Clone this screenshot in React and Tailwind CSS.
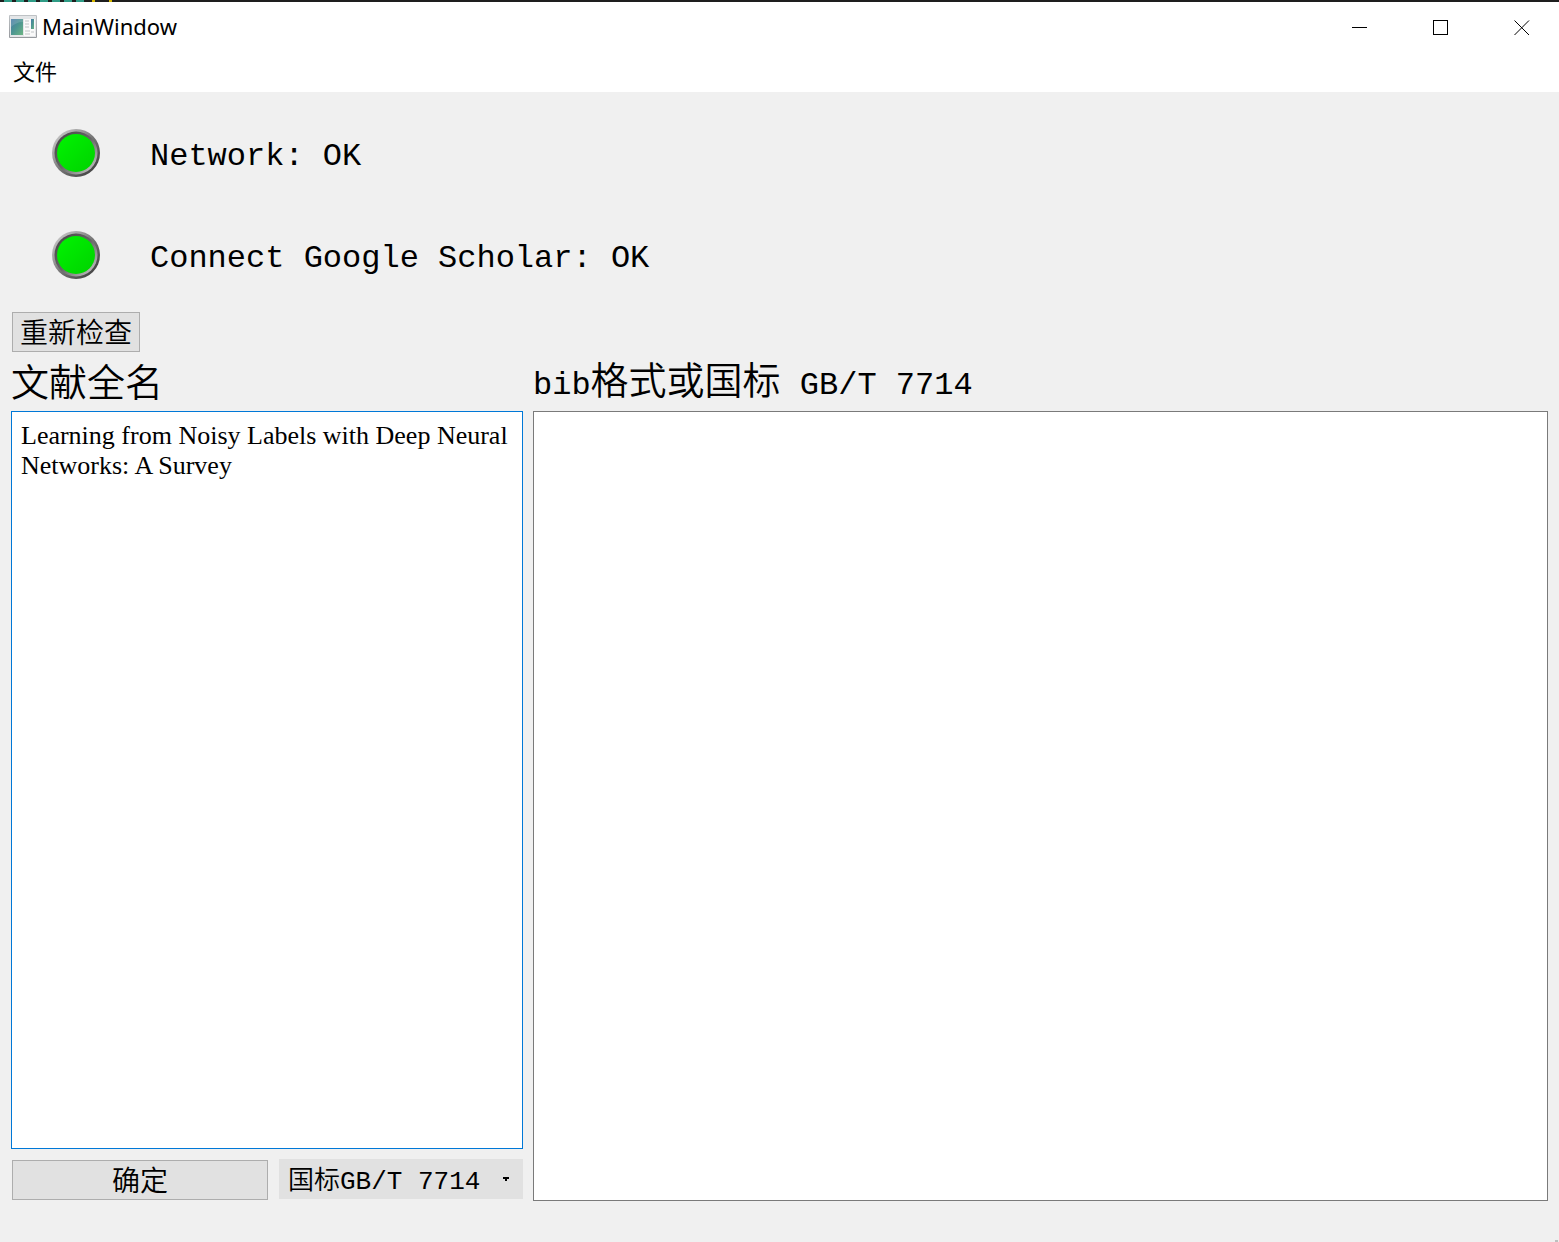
import React from "react";

const mono = "font-['Liberation_Mono','Noto_Sans_CJK_SC',monospace]";
const cjk = "font-['Noto_Sans_CJK_SC',sans-serif] font-[350]";

function AppIcon() {
  return (
    <svg width="28" height="24" viewBox="0 0 28 24" aria-hidden="true">
      <defs>
        <linearGradient id="pane" x1="0" y1="0" x2="1" y2="1">
          <stop offset="0" stopColor="#4678a8" />
          <stop offset="0.5" stopColor="#4d9691" />
          <stop offset="1" stopColor="#6db583" />
        </linearGradient>
        <linearGradient id="frame" x1="0" y1="0" x2="0" y2="1">
          <stop offset="0" stopColor="#bfc3c6" />
          <stop offset="1" stopColor="#96999d" />
        </linearGradient>
      </defs>
      <rect x="0" y="0" width="28" height="23" rx="1" fill="url(#frame)" />
      <rect x="1" y="1" width="26" height="21" fill="#e4e6e8" />
      <rect x="2" y="4" width="12" height="16" fill="url(#pane)" />
      <path d="M2 4h12v3C9 7 5 9 2 12z" fill="#fff" opacity=".15" />
      <rect x="15" y="4" width="11" height="17" fill="#fafafa" />
      <path d="M16 6h4M16 9h4M16 12h4M16 16h5M16 19h5M22 17h3" stroke="#d3d6d8" strokeWidth="1.5" />
      <rect x="22" y="4" width="3" height="10" fill="url(#pane)" />
    </svg>
  );
}

function Led({ id }) {
  return (
    <svg width="48" height="48" viewBox="0 0 48 48" className="shrink-0" aria-hidden="true">
      <defs>
        <linearGradient id={id + "-outer"} x1="0" y1="0" x2="1" y2="1">
          <stop offset="0" stopColor="#dcdcdc" />
          <stop offset="0.5" stopColor="#777" />
          <stop offset="1" stopColor="#333" />
        </linearGradient>
        <linearGradient id={id + "-inner"} x1="0" y1="0" x2="1" y2="1">
          <stop offset="0" stopColor="#444" />
          <stop offset="0.5" stopColor="#666" />
          <stop offset="1" stopColor="#d4d4d4" />
        </linearGradient>
        <linearGradient id={id + "-lamp"} x1="0" y1="0" x2="1" y2="1">
          <stop offset="0" stopColor="#00f400" />
          <stop offset="1" stopColor="#00d200" />
        </linearGradient>
      </defs>
      <circle cx="24" cy="24" r="24" fill={`url(#${id}-outer)`} />
      <circle cx="24" cy="24" r="21.5" fill={`url(#${id}-inner)`} />
      <circle cx="24" cy="24" r="19" fill={`url(#${id}-lamp)`} />
    </svg>
  );
}

function Status({ id, children }) {
  return (
    <div className="flex h-[102px] items-center gap-[50px] pl-[41px]">
      <Led id={id} />
      <p className={`${mono} pt-2 text-[32px] leading-10 whitespace-pre`}>{children}</p>
    </div>
  );
}

function WindowButton({ label, children }) {
  return (
    <button type="button" aria-label={label} className="flex h-full w-[81px] items-center justify-center pl-1.5">
      <svg width="16" height="16" viewBox="0 0 16 16" fill="none" stroke="#000" strokeWidth="1" aria-hidden="true">
        {children}
      </svg>
    </button>
  );
}

export default function App() {
  return (
    <div className="flex min-h-screen flex-col bg-[#f0f0f0] text-black">
      <div className="flex h-0.5 bg-[#1e1e1e]">
        <div className="ml-1 w-20 bg-[repeating-linear-gradient(90deg,#2f9c86_0px,#2f9c86_8px,#1e1e1e_8px,#1e1e1e_12px)]" />
        <div className="ml-2 w-5 bg-[repeating-linear-gradient(90deg,#d7b800_0px,#d7b800_3px,#1e1e1e_3px,#1e1e1e_17px)]" />
      </div>
      <header className="flex h-[50px] items-center bg-white pl-[9px]">
        <AppIcon />
        <h1 className="ml-[5px] flex-1 pb-0.5 font-['Noto_Sans',sans-serif] text-[22px] leading-8">MainWindow</h1>
        <WindowButton label="Minimize">
          <path d="M0 8.5h15" />
        </WindowButton>
        <WindowButton label="Maximize">
          <rect x="0.5" y="1.5" width="14" height="14" />
        </WindowButton>
        <WindowButton label="Close">
          <path d="M0.5 1.5l14.5 14.5M15 1.5L0.5 16" />
        </WindowButton>
      </header>
      <nav className="flex h-10 items-center bg-white px-[13px] pb-1">
        <button type="button" className="font-['Noto_Sans_CJK_SC',sans-serif] text-[22px] leading-8">
          文件
        </button>
      </nav>

      <main className="flex flex-1 flex-col px-[11px] pt-2.5">
        <Status id="network">Network: OK</Status>
        <Status id="scholar">Connect Google Scholar: OK</Status>
        <div className="flex h-[52px] items-center pl-px">
          <button type="button" className={`${cjk} flex h-10 w-32 items-center justify-center border border-[#adadad] bg-[#e1e1e1] pb-0.5 text-[28px] leading-8`}>
            重新检查
          </button>
        </div>
        <div className="grid flex-1 grid-cols-[512fr_1015fr] gap-2.5 pb-[41px]">
          <section className="flex flex-col">
            <label htmlFor="title" className={`${cjk} flex h-[53px] items-center pb-2.5 text-[38px] leading-10`}>
              文献全名
            </label>
            <textarea
              id="title"
              className="w-full flex-1 resize-none border border-[#0078d7] bg-white px-[9px] py-[9px] font-['Liberation_Serif',serif] text-[26px] leading-[30px] outline-none"
              defaultValue="Learning from Noisy Labels with Deep Neural Networks: A Survey"
            />
            <div className="mt-2.5 flex h-[42px] gap-[11px] pb-px pl-px">
              <button type="button" className={`${cjk} mt-px flex-1 border border-[#adadad] bg-[#e1e1e1] pb-0.5 text-[28px] leading-8`}>
                确定
              </button>
              <div className="relative flex h-10 w-[244px]">
                <select aria-label="格式" className={`${mono} h-full w-full appearance-none bg-[#e1e1e1] pt-1 pl-[9px] text-[26px] font-[350] outline-none`}>
                  <option>国标GB/T 7714</option>
                </select>
                <svg className="pointer-events-none absolute top-[18px] right-3.5" width="6" height="4" viewBox="0 0 6 4" aria-hidden="true">
                  <path d="M0 0h6v2H4v2H2V2H0z" />
                </svg>
              </div>
            </div>
          </section>
          <section className="flex flex-col">
            <label htmlFor="result" className="flex h-[53px] items-baseline whitespace-pre">
              <span className={`${mono} text-[32px] leading-10`}>bib</span>
              <span className={`${cjk} text-[38px] leading-10`}>格式或国标</span>
              <span className={`${mono} text-[32px] leading-10`}> GB/T 7714</span>
            </label>
            <textarea id="result" className="w-full flex-1 resize-none border border-[#7a7a7a] bg-white p-[9px] font-['Liberation_Serif',serif] text-[26px] leading-[30px] outline-none" />
          </section>
        </div>
      </main>
      <div className="absolute right-px bottom-0 h-0.5 w-[3px] bg-[#bfbfbf]" />
    </div>
  );
}
